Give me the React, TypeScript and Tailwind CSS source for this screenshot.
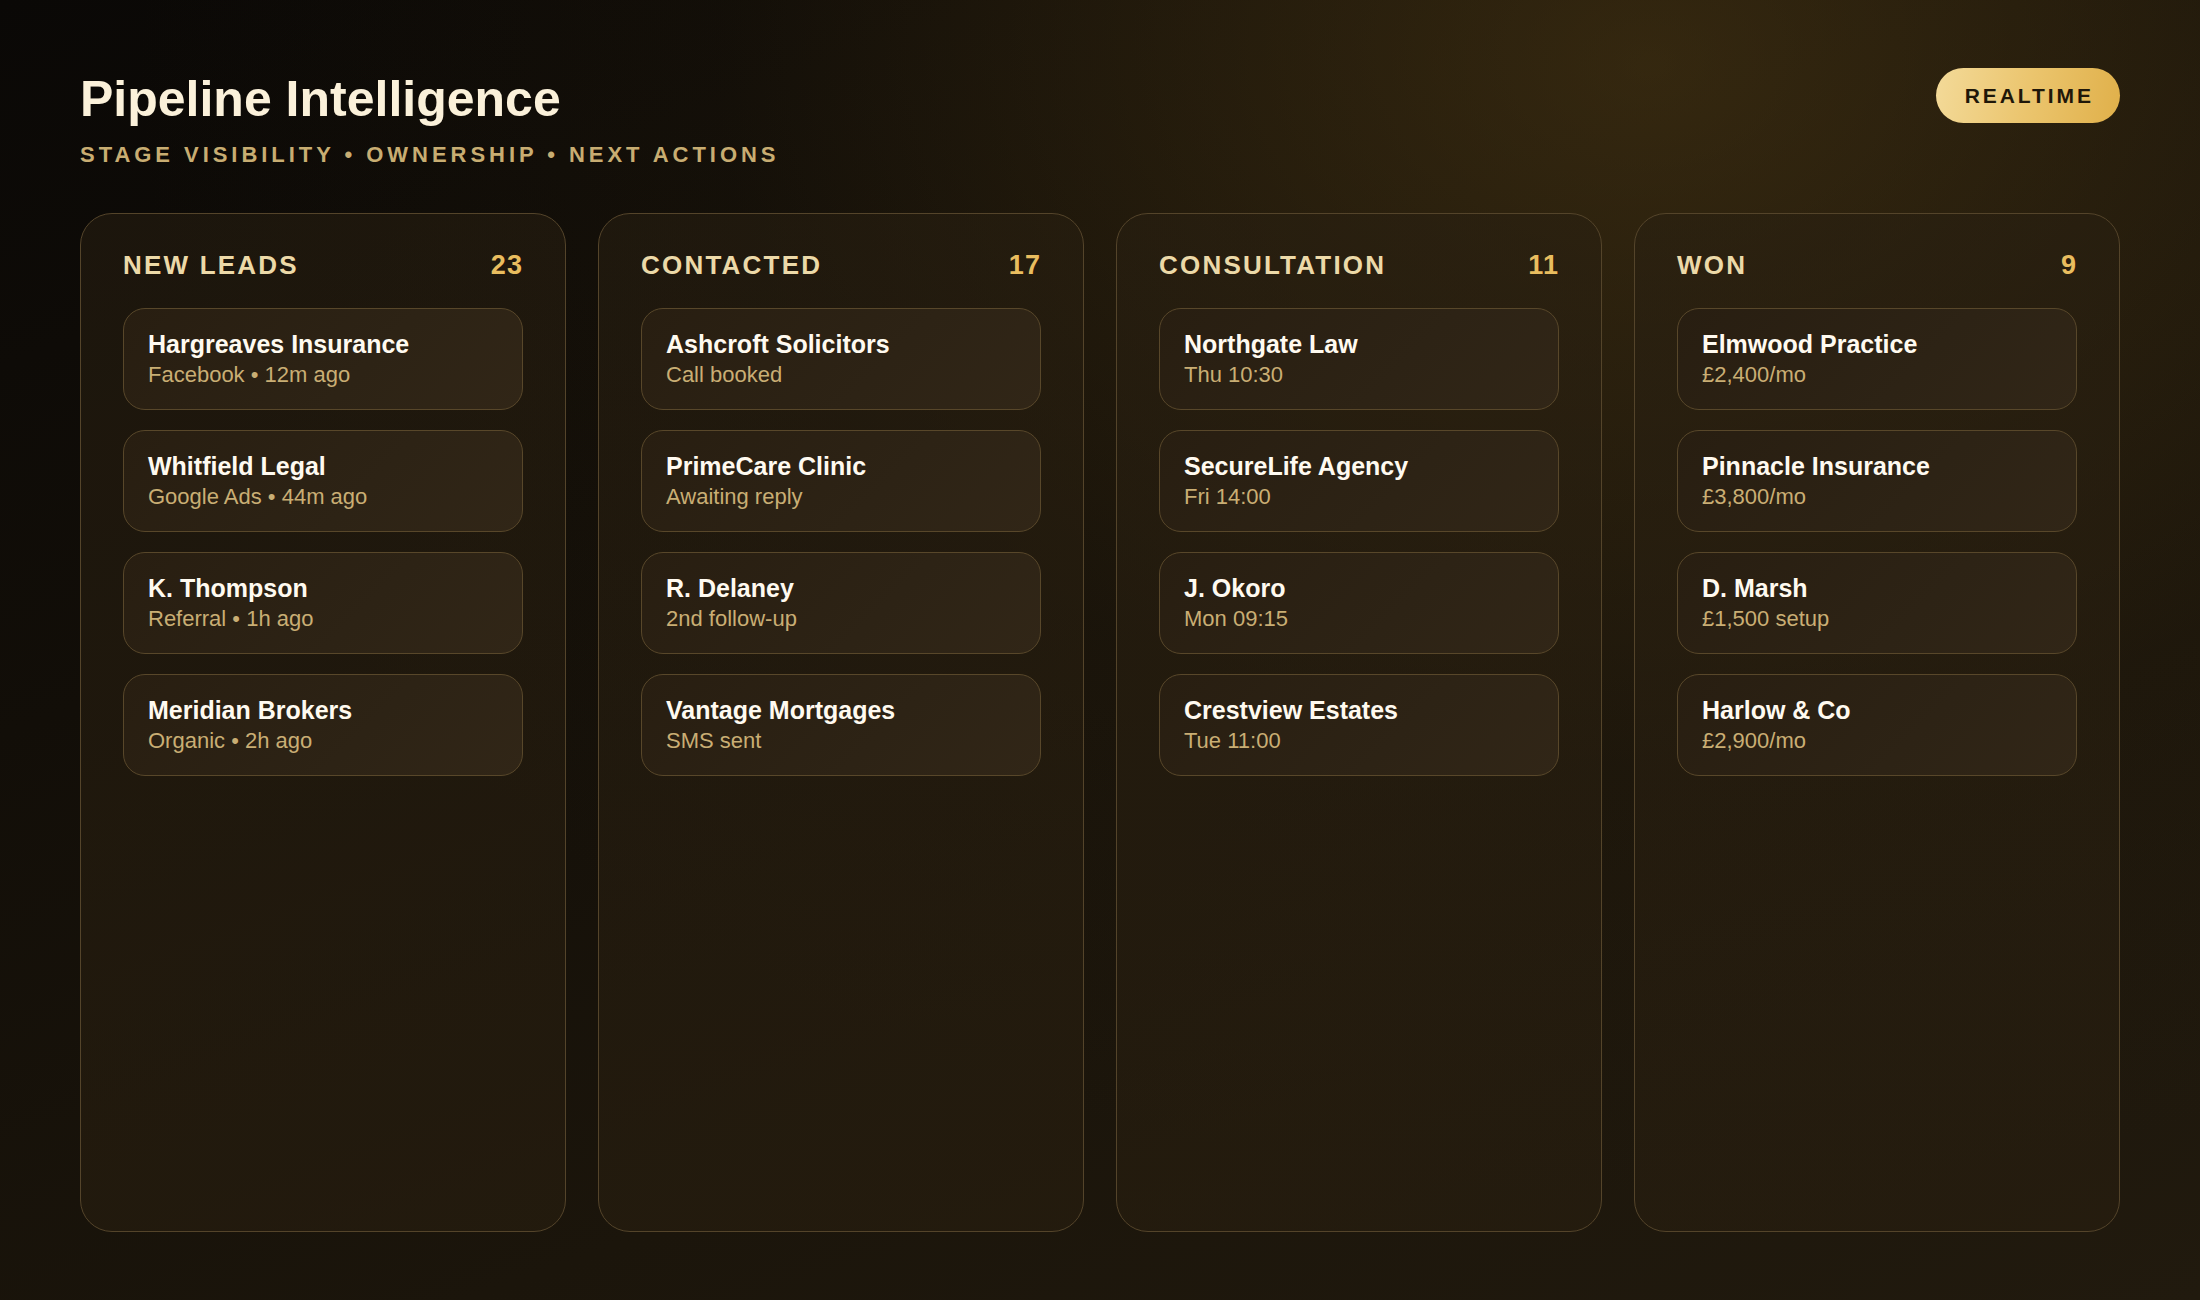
import React from "react";

type Lead = { name: string; meta: string };
type Stage = { title: string; count: number; leads: Lead[] };

const stages: Stage[] = [
  {
    title: "NEW LEADS",
    count: 23,
    leads: [
      { name: "Hargreaves Insurance", meta: "Facebook • 12m ago" },
      { name: "Whitfield Legal", meta: "Google Ads • 44m ago" },
      { name: "K. Thompson", meta: "Referral • 1h ago" },
      { name: "Meridian Brokers", meta: "Organic • 2h ago" },
    ],
  },
  {
    title: "CONTACTED",
    count: 17,
    leads: [
      { name: "Ashcroft Solicitors", meta: "Call booked" },
      { name: "PrimeCare Clinic", meta: "Awaiting reply" },
      { name: "R. Delaney", meta: "2nd follow-up" },
      { name: "Vantage Mortgages", meta: "SMS sent" },
    ],
  },
  {
    title: "CONSULTATION",
    count: 11,
    leads: [
      { name: "Northgate Law", meta: "Thu 10:30" },
      { name: "SecureLife Agency", meta: "Fri 14:00" },
      { name: "J. Okoro", meta: "Mon 09:15" },
      { name: "Crestview Estates", meta: "Tue 11:00" },
    ],
  },
  {
    title: "WON",
    count: 9,
    leads: [
      { name: "Elmwood Practice", meta: "£2,400/mo" },
      { name: "Pinnacle Insurance", meta: "£3,800/mo" },
      { name: "D. Marsh", meta: "£1,500 setup" },
      { name: "Harlow & Co", meta: "£2,900/mo" },
    ],
  },
];

function Card({ lead }: { lead: Lead }) {
  return (
    <div className="rounded-[22px] border border-[#58472a] bg-[linear-gradient(135deg,#281e11_0%,#2d2315_60%,#312617_100%)] px-6 py-5">
      <div className="text-[25px] font-bold leading-[30px] text-[#fffaf0]">{lead.name}</div>
      <div className="mt-[2px] text-[22px] leading-[28px] text-[#c9ae74]">{lead.meta}</div>
    </div>
  );
}

function Column({ stage }: { stage: Stage }) {
  return (
    <div className="flex flex-col rounded-[32px] border border-[#54442a] bg-[linear-gradient(160deg,rgba(40,31,17,0.55)_0%,rgba(40,30,15,0.6)_100%)] px-[42px] pt-[36px]">
      <div className="mb-[28px] flex items-center justify-between leading-[30px]">
        <span className="text-[26px] font-bold tracking-[0.085em] text-[#ecd9a8]">{stage.title}</span>
        <span className="text-[27px] font-bold tracking-[0.04em] text-[#e9bd5f]">{stage.count}</span>
      </div>
      <div className="flex flex-col gap-5">
        {stage.leads.map((l) => (
          <Card key={l.name} lead={l} />
        ))}
      </div>
    </div>
  );
}

export default function App() {
  return (
    <div
      className="flex h-[1300px] w-full flex-col bg-[radial-gradient(ellipse_at_75%_5%,rgba(110,82,28,0.38)_0%,rgba(60,45,18,0.12)_40%,transparent_65%),linear-gradient(160deg,#0a0806_0%,#120e08_35%,#1b150b_70%,#211a0e_100%)] px-[80px] py-[68px]"
      style={{ fontFamily: '"Liberation Sans", Arial, sans-serif' }}
    >
      <div className="mb-[42px] flex items-start justify-between">
        <div>
          <h1 className="text-[50px] font-bold leading-[62px] text-[#fbf1da]">Pipeline Intelligence</h1>
          <div className="mt-2 text-[22px] font-bold leading-[33px] tracking-[0.18em] text-[#c8ad72]">
            STAGE VISIBILITY • OWNERSHIP • NEXT ACTIONS
          </div>
        </div>
        <div className="flex h-[55px] items-center rounded-full bg-[linear-gradient(100deg,#f3da99_0%,#ebc56e_50%,#e0b04a_100%)] pl-[29px] pr-[26px] text-[21px] font-bold tracking-[0.14em] text-[#1f1709]">
          REALTIME
        </div>
      </div>
      <div className="grid flex-1 grid-cols-4 gap-8">
        {stages.map((s) => (
          <Column key={s.title} stage={s} />
        ))}
      </div>
    </div>
  );
}
